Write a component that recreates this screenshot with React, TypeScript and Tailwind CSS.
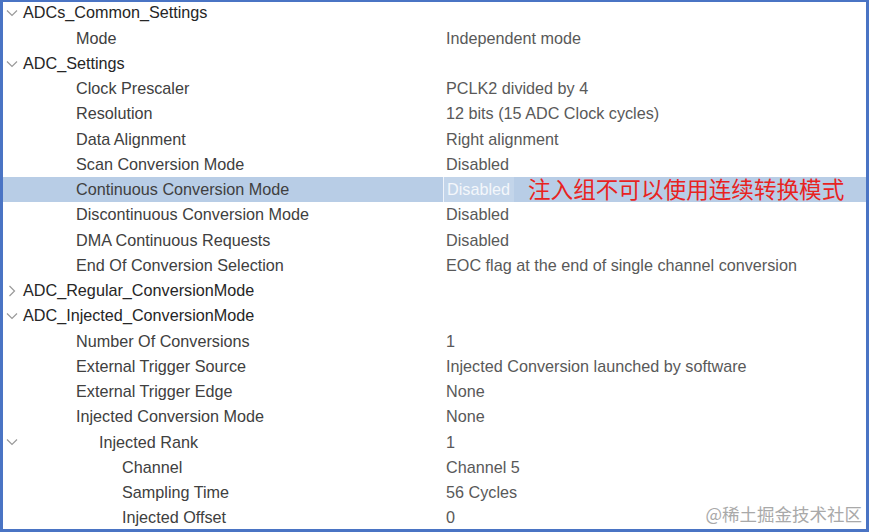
import React from 'react';

type Row = {
  label: string;
  value?: string;
  level: number;
  chevron?: 'open' | 'closed';
  selected?: boolean;
};

const rows: Row[] = [
  { label: 'ADCs_Common_Settings', level: 0, chevron: 'open' },
  { label: 'Mode', value: 'Independent mode', level: 1 },
  { label: 'ADC_Settings', level: 0, chevron: 'open' },
  { label: 'Clock Prescaler', value: 'PCLK2 divided by 4', level: 1 },
  { label: 'Resolution', value: '12 bits (15 ADC Clock cycles)', level: 1 },
  { label: 'Data Alignment', value: 'Right alignment', level: 1 },
  { label: 'Scan Conversion Mode', value: 'Disabled', level: 1 },
  { label: 'Continuous Conversion Mode', value: 'Disabled', level: 1, selected: true },
  { label: 'Discontinuous Conversion Mode', value: 'Disabled', level: 1 },
  { label: 'DMA Continuous Requests', value: 'Disabled', level: 1 },
  { label: 'End Of Conversion Selection', value: 'EOC flag at the end of single channel conversion', level: 1 },
  { label: 'ADC_Regular_ConversionMode', level: 0, chevron: 'closed' },
  { label: 'ADC_Injected_ConversionMode', level: 0, chevron: 'open' },
  { label: 'Number Of Conversions', value: '1', level: 1 },
  { label: 'External Trigger Source', value: 'Injected Conversion launched by software', level: 1 },
  { label: 'External Trigger Edge', value: 'None', level: 1 },
  { label: 'Injected Conversion Mode', value: 'None', level: 1 },
  { label: 'Injected Rank', value: '1', level: 2, chevron: 'open' },
  { label: 'Channel', value: 'Channel 5', level: 3 },
  { label: 'Sampling Time', value: '56 Cycles', level: 3 },
  { label: 'Injected Offset', value: '0', level: 3 },
];

const indent = ['pl-[20px]', 'pl-[73px]', 'pl-[96px]', 'pl-[119px]'];

function Chevron({ dir }: { dir: 'open' | 'closed' }) {
  return (
    <svg width="12" height="12" viewBox="0 0 12 12" className="absolute left-[3px] top-[7px]">
      {dir === 'open' ? (
        <path d="M1 3.5 L6 8.5 L11 3.5" fill="none" stroke="#9a9a9a" strokeWidth="1.2" />
      ) : (
        <path d="M3.5 1 L8.5 6 L3.5 11" fill="none" stroke="#9a9a9a" strokeWidth="1.2" />
      )}
    </svg>
  );
}

export default function App() {
  return (
    <div
      className="w-[869px] h-[532px] bg-white border-[#4a74c4] border-t-[2px] border-l-[3px] border-r-[3px] border-b-[3px] overflow-hidden relative text-[16.2px]"
      style={{ fontFamily: '"Liberation Sans", Arial, sans-serif' }}
    >
      <div className="-mt-[2px]">
        {rows.map((r, i) => (
          <div
            key={i}
            className={`relative flex items-center h-[25.25px] ${r.selected ? 'bg-[#b8cde6]' : ''}`}
          >
            {r.chevron && <Chevron dir={r.chevron} />}
            <div
              className={`w-[440px] shrink-0 truncate ${indent[r.level]} ${
                r.level === 0 ? 'text-[#262626]' : 'text-[#404040]'
              }`}
            >
              {r.label}
            </div>
            {r.value && (
              <div
                className={`h-full flex items-center pl-[3px] ${
                  r.selected ? 'border-l border-[#eef3fa] text-[#f4f7fb] bg-[#c3d5ea] pr-[4px]' : 'text-[#595959]'
                }`}
              >
                {r.value}
              </div>
            )}
            {r.selected && (
              <span
                className="ml-[14px] text-[22.6px] text-[#e8231f] leading-none"
                style={{ fontFamily: '"Noto Sans CJK SC", sans-serif' }}
              >
                注入组不可以使用连续转换模式
              </span>
            )}
          </div>
        ))}
      </div>
      <div
        className="absolute right-[4px] bottom-[2px] text-[17.5px] text-[#a9a9a9]"
        style={{ fontFamily: '"Noto Sans CJK SC", sans-serif' }}
      >
        @稀土掘金技术社区
      </div>
    </div>
  );
}
